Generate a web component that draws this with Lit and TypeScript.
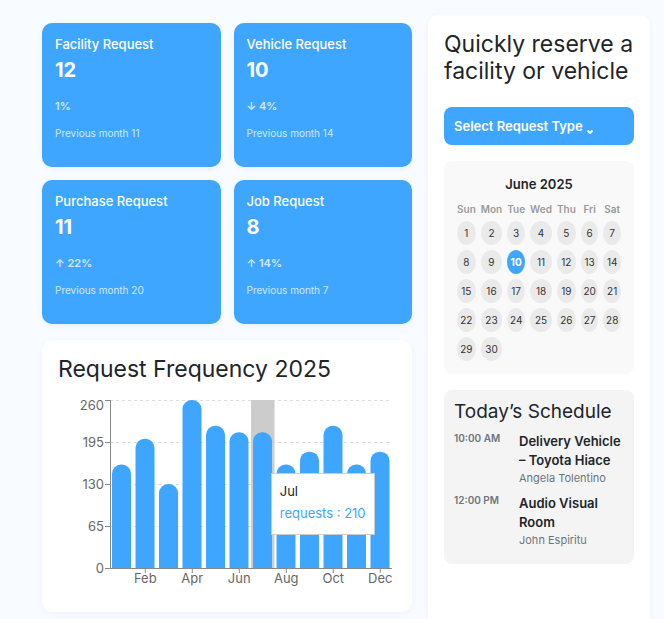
import { LitElement, html, svg, css } from "lit";
import { customElement, property, state } from "lit/decorators.js";
import { classMap } from "lit/directives/class-map.js";

interface Stat {
  title: string;
  value: number;
  change: string;
  previous: number;
}

const STATS: Stat[] = [
  { title: "Facility Request", value: 12, change: "1%", previous: 11 },
  { title: "Vehicle Request", value: 10, change: "↓ 4%", previous: 14 },
  { title: "Purchase Request", value: 11, change: "↑ 22%", previous: 20 },
  { title: "Job Request", value: 8, change: "↑ 14%", previous: 7 },
];

const REQUESTS = [
  { month: "Jan", requests: 160 },
  { month: "Feb", requests: 200 },
  { month: "Mar", requests: 130 },
  { month: "Apr", requests: 260 },
  { month: "May", requests: 220 },
  { month: "Jun", requests: 210 },
  { month: "Jul", requests: 210 },
  { month: "Aug", requests: 160 },
  { month: "Sep", requests: 180 },
  { month: "Oct", requests: 220 },
  { month: "Nov", requests: 160 },
  { month: "Dec", requests: 180 },
];

const SCHEDULE = [
  { time: "10:00 AM", title: "Delivery Vehicle – Toyota Hiace", person: "Angela Tolentino" },
  { time: "12:00 PM", title: "Audio Visual Room", person: "John Espiritu" },
];

@customElement("stat-card")
class StatCard extends LitElement {
  @property({ attribute: false }) stat!: Stat;

  static styles = css`
    :host {
      display: block;
      min-height: 144px;
      box-sizing: border-box;
      padding: 12px 13px;
      border-radius: 10px;
      background: #3ea6ff;
      color: #fff;
      box-shadow: 0 2px 6px rgba(0, 0, 0, 0.05);
    }
    .title {
      margin: 0;
      font-size: 13px;
      line-height: 18px;
      font-weight: 500;
    }
    .value {
      margin: 2px 0 0;
      font-size: 20px;
      line-height: 30px;
      font-weight: 700;
    }
    .change {
      margin: 12px 0 0;
      font-size: 11px;
      line-height: 18px;
      font-weight: 600;
      opacity: 0.75;
    }
    .previous {
      margin: 11px 0 0;
      font-size: 10px;
      line-height: 15px;
      font-weight: 400;
      opacity: 0.75;
    }
  `;

  render() {
    return html`
      <h2 class="title">${this.stat.title}</h2>
      <p class="value">${this.stat.value}</p>
      <p class="change">${this.stat.change}</p>
      <p class="previous">Previous month ${this.stat.previous}</p>
    `;
  }
}

@customElement("request-chart")
class RequestChart extends LitElement {
  @state() private active = 6;

  static styles = css`
    :host {
      display: block;
      position: relative;
    }
    .plot {
      display: block;
      width: 100%;
    }
    .label {
      font-size: 13px;
      fill: #666;
    }
    .grid {
      stroke: #ddd;
      stroke-dasharray: 3 3;
    }
    .axis {
      stroke: #888;
    }
    .bar {
      fill: #3ea6ff;
    }
    .cursor {
      fill: #ccc;
    }
    .tooltip {
      position: absolute;
      top: 39%;
      box-sizing: border-box;
      padding: 7px 8px 11px;
      border: 1px solid #ccc;
      background: #fff;
      font-size: 13px;
      line-height: 20px;
      white-space: nowrap;
    }
    .month {
      margin: 0;
    }
    .count {
      margin: 2px 0 0;
      color: #3ea6ff;
    }
  `;

  render() {
    const left = 52;
    const right = 334;
    const top = 5;
    const base = 173;
    const max = 260;
    const band = (right - left) / REQUESTS.length;
    const y = (v: number) => base - (v / max) * (base - top);
    const ticks = [0, 65, 130, 195, 260];
    const current = REQUESTS[this.active];
    const barPath = (i: number, v: number) => {
      const x = left + i * band + 2;
      const t = y(v);
      return `M${x} ${base}V${t + 9}a9 9 0 0 1 9-9h1a9 9 0 0 1 9 9V${base}z`;
    };
    return html`
      <svg class="plot" viewBox="0 0 338 200" role="img" aria-label="Requests per month in 2025">
        ${ticks.map(
          (t) => svg`
            <line class="grid" x1=${left} x2=${right} y1=${Math.round(y(t)) + 0.5} y2=${Math.round(y(t)) + 0.5} />
            <line class="axis" x1=${left - 5} x2=${left} y1=${Math.round(y(t)) + 0.5} y2=${Math.round(y(t)) + 0.5} />
            <text class="label" text-anchor="end" x=${left - 6} y=${Math.max(y(t) + 5, 15)}>${t}</text>`
        )}
        <line class="axis" x1=${left + 0.5} x2=${left + 0.5} y1=${top} y2=${base} />
        <rect class="cursor" x=${left + this.active * band} y=${top} width=${band} height=${base - top} />
        <line class="axis" x1=${left} x2=${right} y1=${base + 0.5} y2=${base + 0.5} />
        ${REQUESTS.map((d, i) => {
          const cx = left + (i + 0.5) * band;
          return svg`
            <path class="bar" d=${barPath(i, d.requests)} @mouseenter=${() => (this.active = i)} />
            ${
              i % 2
                ? svg`<line class="axis" x1=${cx} x2=${cx} y1=${base} y2=${base + 5} />
                    <text class="label" text-anchor="middle" x=${cx} y=${base + 15}>${d.month}</text>`
                : null
            }`;
        })}
      </svg>
      <div class="tooltip" style="left: ${((left + (this.active + 0.5) * band + 8) / 338) * 100}%">
        <p class="month">${current.month}</p>
        <p class="count">requests : ${current.requests}</p>
      </div>
    `;
  }
}

@customElement("month-calendar")
class MonthCalendar extends LitElement {
  @state() private selected = 10;

  static styles = css`
    :host {
      display: block;
      padding: 13px;
      border-radius: 8px;
      background: #f9f9f9;
    }
    .title {
      margin: 0 0 8px;
      font-size: 13px;
      line-height: 20px;
      font-weight: 600;
      text-align: center;
    }
    .days {
      display: grid;
      grid-template-columns: repeat(7, 1fr);
      gap: 5px;
    }
    .weekday {
      font-size: 10px;
      line-height: 14px;
      font-weight: 600;
      text-align: center;
      color: #999;
    }
    .day {
      height: 24px;
      min-width: 0;
      padding: 0;
      border: 0;
      border-radius: 50%;
      background: #eaeaea;
      color: #333;
      font: inherit;
      font-size: 10px;
      text-align: center;
    }
    .selected {
      background: #3ea6ff;
      color: #fff;
      font-weight: 700;
    }
  `;

  render() {
    return html`
      <h2 class="title">June 2025</h2>
      <div class="days">
        ${["Sun", "Mon", "Tue", "Wed", "Thu", "Fri", "Sat"].map((d) => html`<span class="weekday">${d}</span>`)}
        ${Array.from({ length: 30 }, (_, i) => i + 1).map(
          (d) => html`<button
            type="button"
            class=${classMap({ day: true, selected: d === this.selected })}
            @click=${() => (this.selected = d)}
          >${d}</button>`
        )}
      </div>
    `;
  }
}

@customElement("app-root")
class AppRoot extends LitElement {
  static styles = css`
    :host {
      display: grid;
      grid-template-columns: minmax(0, 5fr) minmax(0, 3fr);
      gap: 16px;
      box-sizing: border-box;
      min-height: 100vh;
      padding: 15px 14px 0 42px;
      background: #f8fbff;
      color: #212529;
      font-family: Inter, sans-serif;
    }
    .main {
      padding: 8px 0 7px;
    }
    .stats {
      display: grid;
      grid-template-columns: 1fr 1fr;
      gap: 13px;
      margin-bottom: 16px;
    }
    .card {
      padding: 16px 16px 17px;
      border-radius: 10px;
      background: #fff;
      box-shadow: 0 2px 6px rgba(0, 0, 0, 0.04);
    }
    .heading {
      margin: 0 0 12px;
      font-size: 23px;
      line-height: 27px;
      font-weight: 400;
    }
    .side {
      display: flex;
      flex-direction: column;
      gap: 16px;
      padding: 16px;
      border-radius: 10px 10px 0 0;
      background: #fff;
      box-shadow: 0 2px 6px rgba(0, 0, 0, 0.04);
    }
    .side .heading {
      margin-bottom: 6px;
    }
    .select {
      display: flex;
      align-items: center;
      gap: 4px;
      height: 38px;
      padding: 0 10px;
      border: 0;
      border-radius: 8px;
      background: #3ea6ff;
      color: #fff;
      font: inherit;
      font-size: 13px;
      font-weight: 600;
      white-space: nowrap;
    }
    .chevron {
      width: 6px;
      height: 4px;
      margin-top: 12px;
      fill: none;
      stroke: #fff;
      stroke-width: 2;
    }
    .schedule {
      padding: 10px 10px 16px;
      border-radius: 8px;
      background: #f4f4f4;
    }
    .subheading {
      margin: 0 0 8px;
      font-size: 19px;
      line-height: 24px;
      font-weight: 400;
    }
    .events {
      display: grid;
      gap: 8px;
      margin: 0;
      padding: 0;
      list-style: none;
    }
    .event {
      display: grid;
      grid-template-columns: 65px 1fr;
    }
    .time {
      font-size: 10px;
      line-height: 12px;
      font-weight: 600;
      color: #6c757d;
    }
    .name {
      margin: 0;
      font-size: 13px;
      line-height: 19px;
      font-weight: 600;
    }
    .person {
      margin: 0;
      font-size: 11px;
      line-height: 16px;
      color: #6c757d;
    }
  `;

  render() {
    return html`
      <main class="main">
        <section class="stats">${STATS.map((s) => html`<stat-card .stat=${s}></stat-card>`)}</section>
        <section class="card">
          <h1 class="heading">Request Frequency 2025</h1>
          <request-chart></request-chart>
        </section>
      </main>
      <aside class="side">
        <h1 class="heading">Quickly reserve a facility or vehicle</h1>
        <button class="select" type="button" aria-haspopup="menu">
          Select Request Type
          <svg class="chevron" viewBox="0 0 6 4" aria-hidden="true"><path d="M0.5 0.5 3 3 5.5 0.5" /></svg>
        </button>
        <month-calendar></month-calendar>
        <section class="schedule">
          <h2 class="subheading">Today’s Schedule</h2>
          <ul class="events">
            ${SCHEDULE.map(
              (e) => html`<li class="event">
                <time class="time">${e.time}</time>
                <div>
                  <h3 class="name">${e.title}</h3>
                  <p class="person">${e.person}</p>
                </div>
              </li>`
            )}
          </ul>
        </section>
      </aside>
    `;
  }
}
